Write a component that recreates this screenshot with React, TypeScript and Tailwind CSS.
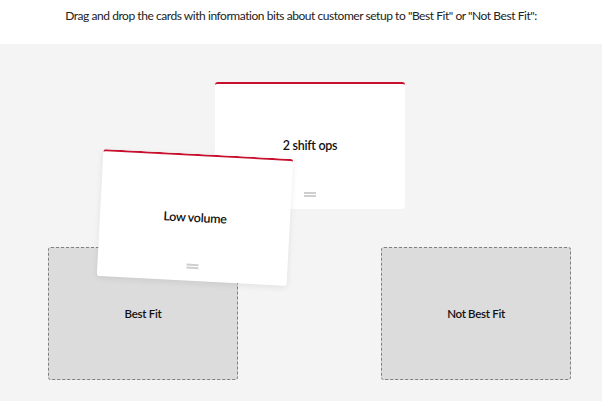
function Card({ label, className }: { label: string; className: string }) {
  return (
    <div
      className={`absolute w-[190px] h-[127px] bg-white rounded-[3px] border-t-2 border-[#c8102e] flex items-center justify-center ${className}`}
    >
      <span className="text-[12.5px] font-semibold text-[#111] tracking-[-0.3px]">{label}</span>
      <div className="absolute bottom-[12px] left-1/2 -translate-x-1/2 w-[12px] flex flex-col gap-[1px]">
        <div className="h-[2px] bg-[#cfcfcf]" />
        <div className="h-[2px] bg-[#cfcfcf]" />
      </div>
    </div>
  );
}

function DropZone({ label }: { label: string }) {
  return (
    <div className="w-[190px] h-[133px] bg-[#dcdcdc] border border-dashed border-[#808080] rounded-[3px] flex items-center justify-center">
      <span className="text-[11.5px] font-semibold text-[#111] tracking-[-0.3px]">{label}</span>
    </div>
  );
}

export default function App() {
  return (
    <div className="w-[602px] h-[401px] overflow-hidden bg-[#f4f4f4] font-['Lato',sans-serif]">
      <div className="h-[44px] bg-white flex justify-center pt-[7px]">
        <p className="text-[12px] text-[#222] tracking-[-0.45px]">
          Drag and drop the cards with information bits about customer setup to "Best Fit" or "Not Best Fit":
        </p>
      </div>
      <div className="relative h-[357px]">
        <div className="flex justify-between pl-[48px] pr-[31px] pt-[203px]">
          <DropZone label="Best Fit" />
          <DropZone label="Not Best Fit" />
        </div>
        <Card label="2 shift ops" className="left-[215px] top-[38px]" />
        <Card
          label="Low volume"
          className="left-[100px] top-[110px] rotate-[3deg] shadow-[0_2px_6px_rgba(0,0,0,0.08)]"
        />
      </div>
    </div>
  );
}
